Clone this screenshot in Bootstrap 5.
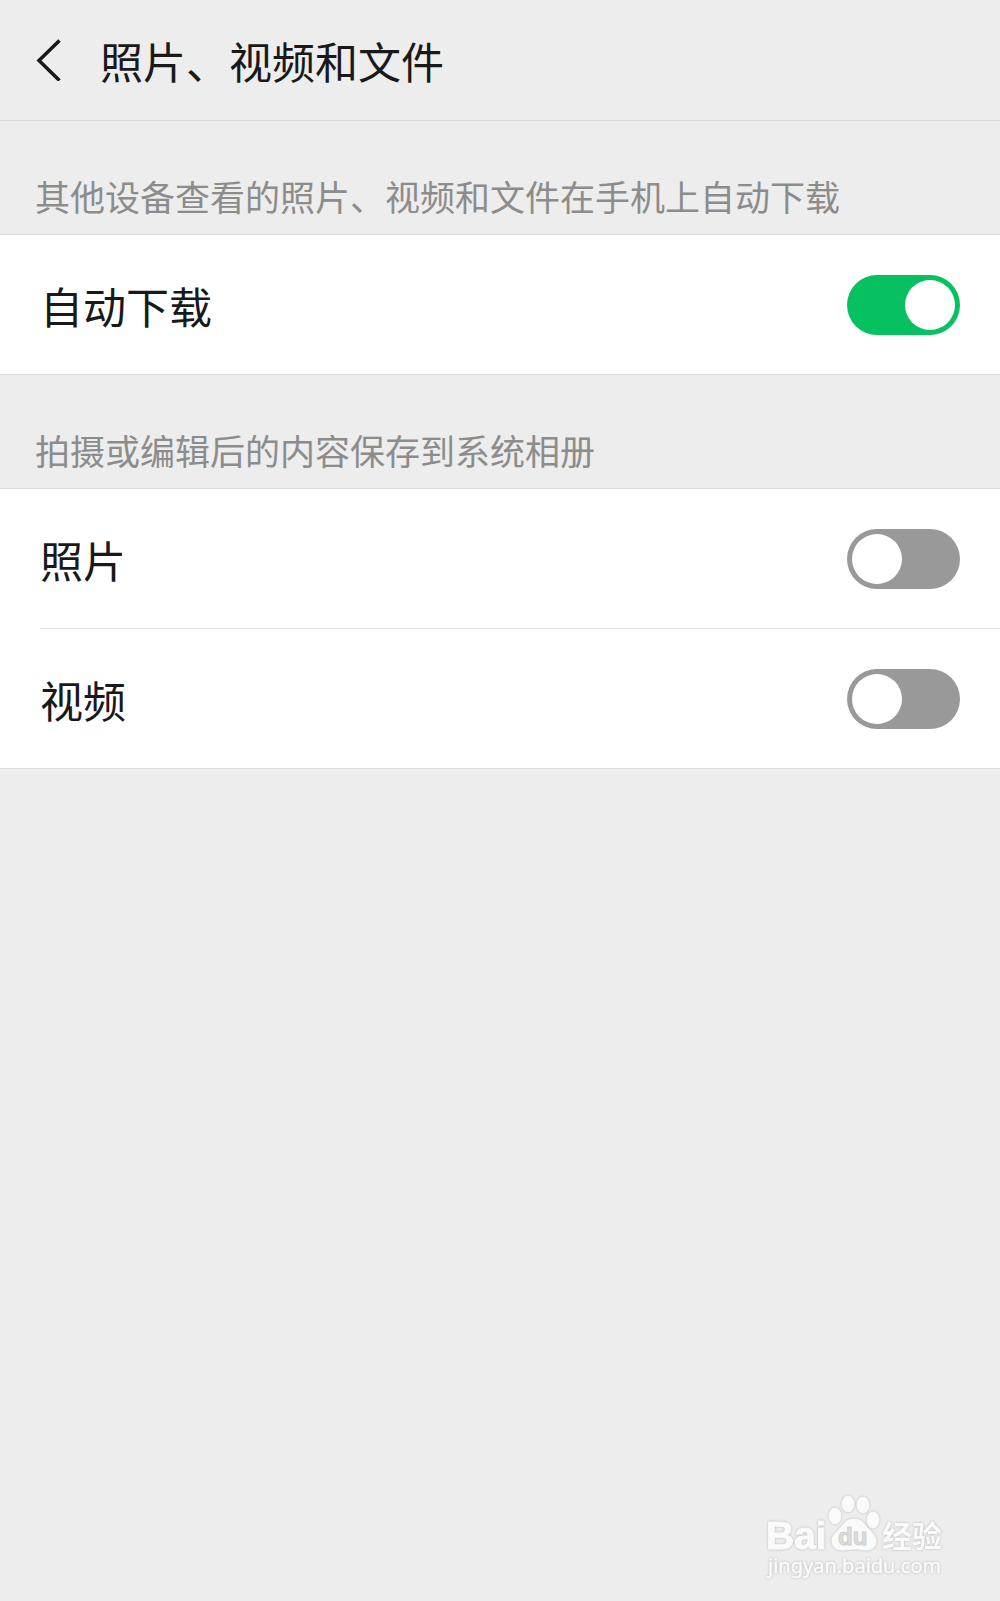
<!DOCTYPE html>
<html lang="zh-CN">
<head>
<meta charset="utf-8">
<meta name="viewport" content="width=device-width, initial-scale=1">
<title>照片、视频和文件</title>
<link href="https://cdn.jsdelivr.net/npm/bootstrap@5.3.0/dist/css/bootstrap.min.css" rel="stylesheet">
<style>
  body {
    background: #ededed;
    color: #191919;
    font-family: "Noto Sans CJK SC", sans-serif;
    font-size: 43px;
    line-height: 60px;
  }
  .topbar {
    min-height: 121px;
    padding: 0 36px;
    gap: 39px;
    border-bottom: 1px solid #d8d8d8;
  }
  .topbar h1 { font-size: 43px; line-height: 60px; font-weight: 400; }
  .back-link svg { width: 25px; height: 42px; }
  .group-label {
    padding: 49px 35px 12px;
    font-size: 35px;
    line-height: 52px;
    font-weight: 400;
    color: #8c8c8c;
  }
  .settings {
    background: #fff;
    border-top: 1px solid #dadada;
    border-bottom: 1px solid #dadada;
    padding-left: 40px;
  }
  .setting { min-height: 139px; padding-right: 40px; }
  .setting + .setting { border-top: 1px solid #e0e0e0; min-height: 140px; }
  .setting .form-check-input {
    width: 113px;
    height: 60px;
    border: 0;
    border-radius: 30px;
    background: #999;
    padding: 5px;
  }
  .setting .form-check-input::before {
    content: "";
    display: block;
    width: 50px;
    height: 50px;
    border-radius: 50%;
    background: #fff;
  }
  .setting .form-check-input:checked { background: #07c160; }
  .setting .form-check-input:checked::before { margin-left: auto; }
  .watermark { width: 240px; height: 131px; margin-right: 20px; }
  .watermark-ink { filter: drop-shadow(0 0 1px #b4b4b4); }
</style>
<script src="https://cdn.jsdelivr.net/npm/bootstrap@5.3.0/dist/js/bootstrap.bundle.min.js"></script>
</head>
<body class="d-flex flex-column min-vh-100">
  <header class="topbar d-flex align-items-center">
    <a class="back-link d-flex text-reset" href="#" aria-label="返回">
      <svg viewBox="0 0 25 42" fill="none" stroke="currentColor" stroke-width="3.500" aria-hidden="true"><path d="M23.500 1.500L3 21.500l20.500 20"/></svg>
    </a>
    <h1 class="m-0">照片、视频和文件</h1>
  </header>

  <main>
    <section>
      <h2 class="group-label m-0">其他设备查看的照片、视频和文件在手机上自动下载</h2>
      <div class="settings">
        <div class="setting d-flex align-items-center justify-content-between">
          <label for="auto">自动下载</label>
          <input class="form-check-input m-0" type="checkbox" role="switch" id="auto" checked>
        </div>
      </div>
    </section>
    <section>
      <h2 class="group-label m-0">拍摄或编辑后的内容保存到系统相册</h2>
      <div class="settings">
        <div class="setting d-flex align-items-center justify-content-between">
          <label for="photo">照片</label>
          <input class="form-check-input m-0" type="checkbox" role="switch" id="photo">
        </div>
        <div class="setting d-flex align-items-center justify-content-between">
          <label for="video">视频</label>
          <input class="form-check-input m-0" type="checkbox" role="switch" id="video">
        </div>
      </div>
    </section>
  </main>

  <footer class="mt-auto d-flex justify-content-end">
    <svg class="watermark" viewBox="0 0 240 131" role="img" aria-label="Baidu 经验">
      <g class="watermark-ink" fill="#fafafa" stroke="#fafafa" stroke-width="1" stroke-linejoin="round">
        <text x="26" y="79" font-family="Liberation Sans, sans-serif" font-weight="700" font-size="39">Bai</text>
        <text x="142" y="77" font-family="Noto Sans CJK SC, sans-serif" font-weight="700" font-size="30" stroke="none">经验</text>
        <ellipse cx="95" cy="46" rx="6" ry="8"/>
        <ellipse cx="108" cy="34" rx="6" ry="8"/>
        <ellipse cx="123" cy="35" rx="6" ry="8"/>
        <ellipse cx="133" cy="50" rx="6" ry="8"/>
        <path d="M114 49c6 0 9 3 12 7s9 8 10 14c1 7-5 11-11 10-5-1-7-1-11-1s-7 1-12 1c-6 0-11-4-10-11 1-5 6-8 10-13 3-4 6-7 12-7z"/>
        <text x="28" y="103" font-family="Noto Sans, sans-serif" font-size="20" stroke-width="0.500">jingyan.baidu.com</text>
      </g>
      <text x="98" y="75" font-family="Liberation Sans, sans-serif" font-weight="700" font-size="24" fill="#dedede" stroke="#cfcfcf" stroke-width="1">du</text>
    </svg>
  </footer>
</body>
</html>
